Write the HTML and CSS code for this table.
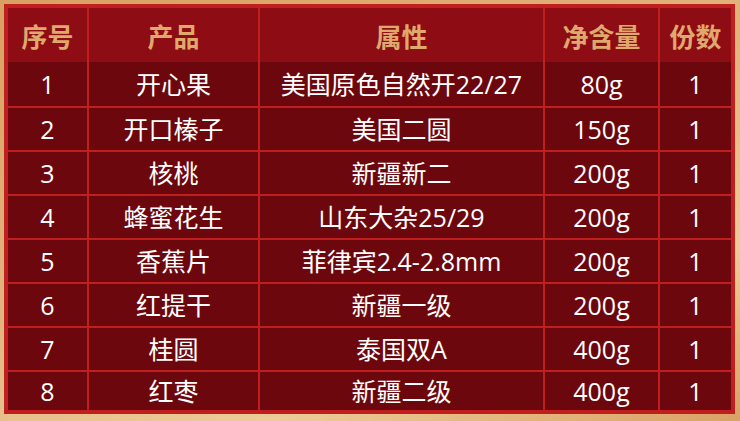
FILE: index.html
```html
<!DOCTYPE html>
<html lang="zh-CN">
<head>
<meta charset="utf-8">
<link rel="stylesheet" href="styles.css">
</head>
<body>
<div class="sheet">
  <div class="row head">
    <div class="cell">序号</div><div class="cell">产品</div><div class="cell">属性</div><div class="cell">净含量</div><div class="cell">份数</div>
  </div>
  <div class="row first">
    <div class="cell">1</div><div class="cell">开心果</div><div class="cell">美国原色自然开22/27</div><div class="cell">80g</div><div class="cell">1</div>
  </div>
  <div class="row">
    <div class="cell">2</div><div class="cell">开口榛子</div><div class="cell">美国二圆</div><div class="cell">150g</div><div class="cell">1</div>
  </div>
  <div class="row">
    <div class="cell">3</div><div class="cell">核桃</div><div class="cell">新疆新二</div><div class="cell">200g</div><div class="cell">1</div>
  </div>
  <div class="row">
    <div class="cell">4</div><div class="cell">蜂蜜花生</div><div class="cell">山东大杂25/29</div><div class="cell">200g</div><div class="cell">1</div>
  </div>
  <div class="row">
    <div class="cell">5</div><div class="cell">香蕉片</div><div class="cell">菲律宾2.4-2.8mm</div><div class="cell">200g</div><div class="cell">1</div>
  </div>
  <div class="row">
    <div class="cell">6</div><div class="cell">红提干</div><div class="cell">新疆一级</div><div class="cell">200g</div><div class="cell">1</div>
  </div>
  <div class="row">
    <div class="cell">7</div><div class="cell">桂圆</div><div class="cell">泰国双A</div><div class="cell">400g</div><div class="cell">1</div>
  </div>
  <div class="row last">
    <div class="cell">8</div><div class="cell">红枣</div><div class="cell">新疆二级</div><div class="cell">400g</div><div class="cell">1</div>
  </div>
</div>
</body>
</html>
```
FILE: styles.css
```css
html, body {
  margin: 0;
  padding: 0;
}
body {
  width: 740px;
  height: 421px;
  overflow: hidden;
  background: linear-gradient(160deg, #d9a063 0%, #e2b47e 45%, #eccb98 75%, #d9a266 100%);
  font-family: "Noto Sans CJK SC", "Noto Sans", sans-serif;
}
.sheet {
  box-sizing: border-box;
  width: 731px;
  margin: 4px 0 0 4px;
  border: 4px solid #c11f1f;
  background: #c11f1f;
  display: flex;
  flex-direction: column;
}
.row {
  display: grid;
  grid-template-columns: 79px 169px 283px 113px 71px;
  column-gap: 2px;
  height: 42px;
  margin-top: 2px;
}
.row.first {
  margin-top: 0;
  height: 44px;
}
.row.last {
  height: 38px;
}
.row.head {
  height: 54px;
  margin-top: 0;
}
.cell {
  display: flex;
  align-items: center;
  justify-content: center;
  background: #6c080d;
  color: #ffffff;
  font-family: "Open Sans", "Noto Sans CJK SC", sans-serif;
  font-size: 25px;
  line-height: 1;
  white-space: nowrap;
}
.head .cell {
  background: #8e0c13;
  color: #dfa86c;
  font-family: "Noto Sans CJK SC", sans-serif;
  font-weight: 700;
  font-size: 26px;
  padding-top: 2px;
}
```
